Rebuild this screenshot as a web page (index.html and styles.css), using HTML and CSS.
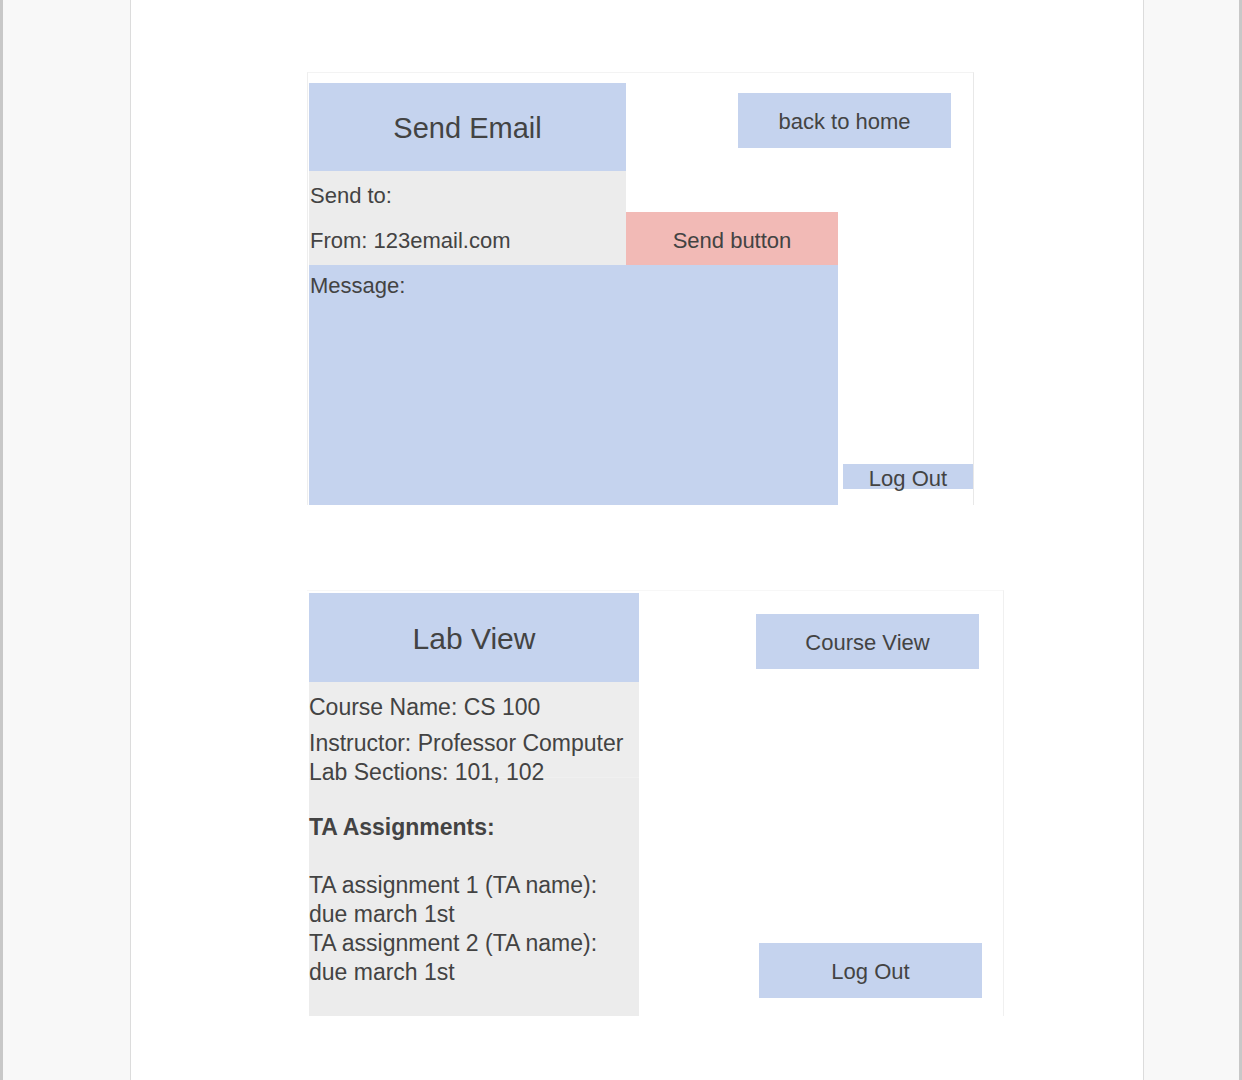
FILE: index.html
```html
<!DOCTYPE html>
<html lang="en">
<head>
    <meta charset="UTF-8">
    <meta name="viewport" content="width=device-width, initial-scale=1.0">
    <title>TA Scheduler Mockups</title>
    <link rel="stylesheet" href="styles.css">
</head>
<body>
    <div class="viewer">
        <div class="sheet">

            <!-- Send email mockup -->
            <div class="mock mock-email">
                <div class="title email-title">Send Email</div>
                <div class="home-cell">
                    <div class="btn btn-home">back to home</div>
                </div>
                <div class="fields">
                    <p>Send to:</p>
                    <p>From: 123email.com</p>
                </div>
                <div class="btn btn-send">Send button</div>
                <div class="message">Message:</div>
                <div class="btn btn-logout-small">Log Out</div>
            </div>

            <!-- Lab view mockup -->
            <div class="mock mock-lab">
                <div class="lab-col">
                    <div class="title lab-title">Lab View</div>
                    <div class="lab-body">
                        <div class="lab-info">
                            <p class="course-name">Course Name: CS 100</p>
                            <p>Instructor: Professor Computer</p>
                            <p>Lab Sections: 101, 102</p>
                        </div>
                        <p class="ta-heading">TA Assignments:</p>
                        <p class="ta-first">TA assignment 1 (TA name):</p>
                        <p>due march 1st</p>
                        <p>TA assignment 2 (TA name):</p>
                        <p>due march 1st</p>
                    </div>
                </div>
                <div class="lab-side">
                    <div class="btn btn-course">Course View</div>
                    <div class="btn btn-logout">Log Out</div>
                </div>
            </div>

        </div>
    </div>
</body>
</html>
```

FILE: styles.css
```css
/* Document viewer frame */
body {
    margin: 0;
    background-color: #f8f8f8;
    font-family: "Liberation Sans", Arial, sans-serif;
    color: #434343;
}

p {
    margin: 0;
}

.viewer {
    height: 1080px;
    border-left: 3px solid #c8c8c8;
    border-right: 3px solid #c8c8c8;
    display: flex;
    overflow: hidden;
}

.sheet {
    width: 1014px;
    flex-shrink: 0;
    margin-left: 127px;
    background-color: #ffffff;
    border-left: 1px solid #dcdcdc;
    border-right: 1px solid #dcdcdc;
    padding-left: 176px;
    box-sizing: border-box;
}

.mock {
    box-sizing: border-box;
}

.title {
    background-color: #c5d3ee;
    display: flex;
    align-items: center;
    justify-content: center;
}

.btn {
    background-color: #c5d3ee;
    display: flex;
    align-items: center;
    justify-content: center;
    font-size: 22px;
    padding-top: 3px;
    box-sizing: border-box;
}

/* Send email */
.mock-email {
    margin-top: 72px;
    width: 667px;
    border-top: 1px solid #f3f3f3;
    border-left: 1px solid #eeeeee;
    border-right: 1px solid #e8e8e8;
    padding: 10px 0 0 1px;
    display: grid;
    grid-template-columns: 317px 212px 5px 130px;
    grid-template-rows: 88px 94px 240px;
}

.email-title {
    grid-column: 1;
    grid-row: 1;
    font-size: 29px;
    padding-top: 2px;
}

.home-cell {
    grid-column: 2 / 5;
    grid-row: 1;
    display: flex;
    justify-content: flex-end;
    align-items: flex-start;
    padding: 10px 22px 0 0;
}

.btn-home {
    width: 213px;
    height: 55px;
}

.fields {
    grid-column: 1;
    grid-row: 2;
    background-color: #ececec;
    font-size: 22px;
    line-height: 45px;
    padding: 2px 0 0 1px;
}

.btn-send {
    grid-column: 2;
    grid-row: 2;
    align-self: end;
    height: 54px;
    margin-bottom: -1px;
    background-color: #f2bab6;
}

.message {
    grid-column: 1 / 3;
    grid-row: 3;
    background-color: #c5d3ee;
    font-size: 22px;
    line-height: 42px;
    padding-left: 1px;
}

.btn-logout-small {
    grid-column: 4;
    grid-row: 3;
    align-self: end;
    height: 25px;
    margin-bottom: 16px;
    padding-top: 4px;
}

/* Lab view */
.mock-lab {
    margin-top: 85px;
    width: 697px;
    border-top: 1px solid #f7f7f7;
    border-right: 1px solid #f0f0f0;
    padding: 2px 0 0 2px;
    display: flex;
}

.lab-col {
    width: 330px;
}

.lab-title {
    height: 89px;
    font-size: 30px;
    padding-top: 2px;
    box-sizing: border-box;
}

.lab-body {
    background-color: #ececec;
    height: 334px;
    font-size: 23px;
    line-height: 29px;
    box-sizing: border-box;
}

.lab-info {
    padding-top: 11px;
    height: 96px;
    box-sizing: border-box;
    background-color: #ededed;
    border-bottom: 1px solid #f0f0f0;
}

.course-name {
    margin-bottom: 7px;
}

.ta-heading {
    font-weight: bold;
    margin-top: 35px;
}

.ta-first {
    margin-top: 29px;
}

.lab-side {
    flex: 1;
    display: flex;
    flex-direction: column;
    justify-content: space-between;
    padding: 21px 0 18px 0;
}

.btn-course {
    width: 223px;
    height: 55px;
    margin-left: 117px;
}

.btn-logout {
    width: 223px;
    height: 55px;
    margin-left: 120px;
}
```
